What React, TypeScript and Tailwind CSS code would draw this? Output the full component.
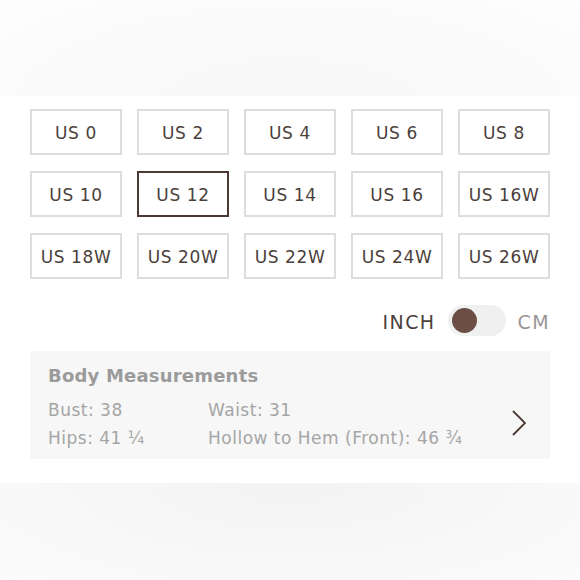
const sizes = [
  'US 0', 'US 2', 'US 4', 'US 6', 'US 8',
  'US 10', 'US 12', 'US 14', 'US 16', 'US 16W',
  'US 18W', 'US 20W', 'US 22W', 'US 24W', 'US 26W',
];

export default function App() {
  const selected = 'US 12';

  return (
    <div className="w-[580px] h-[580px] bg-white flex flex-col font-['DejaVu_Sans',sans-serif] overflow-hidden">
      <div className="h-[96px] bg-[radial-gradient(ellipse_at_50%_110%,#f9f8f8_0%,#fbfafa_60%,#fefefe_100%)]" />

      <div className="px-[30px] pt-[13px]">
        <div className="grid grid-cols-5 gap-x-[15px] gap-y-[16px]">
          {sizes.map((s) => (
            <button
              key={s}
              className={`h-[46px] pt-[4px] flex items-center justify-center text-[17px] tracking-[0.6px] text-[#4b3f3c] bg-white border-2 ${
                s === selected ? 'border-[#4d3a34]' : 'border-[#dedcdc]'
              }`}
            >
              {s}
            </button>
          ))}
        </div>

        <div className="flex items-center justify-end gap-[12px] mt-[26px]">
          <span className="pt-[3px] text-[19px] tracking-[1.4px] text-[#4b3f3c]">INCH</span>
          <div className="w-[58px] h-[31px] rounded-full bg-[#f1f0f0] flex items-center px-[4px]">
            <div className="w-[25px] h-[25px] rounded-full bg-[#6b4f44]" />
          </div>
          <span className="pt-[3px] text-[19px] tracking-[1.4px] text-[#9a9696]">CM</span>
        </div>

        <div className="mt-[14px] h-[108px] bg-[#f7f7f7] flex items-center pl-[18px] pr-[23px]">
          <div className="flex-1 pt-[10px]">
            <div className="text-[18px] tracking-[0.2px] font-bold text-[#9b9b9b] leading-none">Body Measurements</div>
            <div className="grid grid-cols-[160px_1fr] mt-[11px] text-[17px] tracking-[0.5px] text-[#a5a5a5] leading-[28px]">
              <span>Bust: 38</span>
              <span>Waist: 31</span>
              <span>Hips: 41 ¼</span>
              <span>Hollow to Hem (Front): 46 ¾</span>
            </div>
          </div>
          <svg width="16" height="28" viewBox="0 0 16 28" className="mt-[36px]">
            <polyline points="2,2 14,14 2,26" fill="none" stroke="#4b3a34" strokeWidth="1.8" />
          </svg>
        </div>
      </div>

      <div className="mt-[24px] flex-1 bg-[radial-gradient(ellipse_at_50%_0%,#f3f3f3_0%,#f8f8f8_60%,#fbfbfb_100%)]" />
    </div>
  );
}
